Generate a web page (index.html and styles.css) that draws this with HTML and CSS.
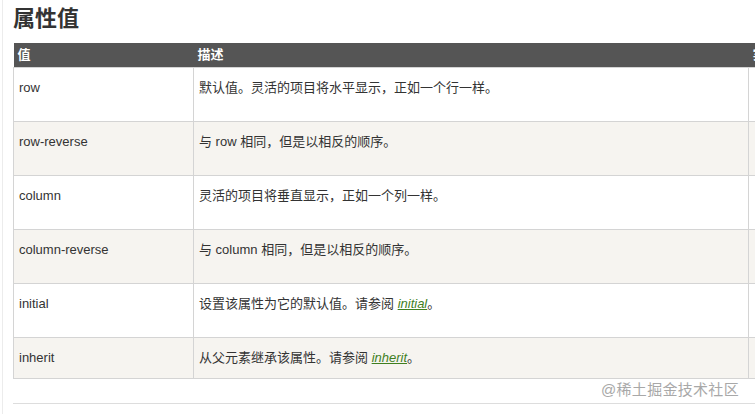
FILE: index.html
```html
<!DOCTYPE html>
<html lang="zh-CN">
<head>
<meta charset="utf-8">
<title>属性值</title>
<link rel="stylesheet" href="styles.css">
</head>
<body>
<div class="wrap">
  <h2 class="title">属性值</h2>
  <table class="ref">
    <thead>
      <tr><th class="c1">值</th><th class="c2">描述</th><th class="c3">实例</th></tr>
    </thead>
    <tbody>
      <tr class="tall"><td>row</td><td>默认值。灵活的项目将水平显示，正如一个行一样。</td><td></td></tr>
      <tr class="tall alt"><td>row-reverse</td><td>与 row 相同，但是以相反的顺序。</td><td></td></tr>
      <tr class="tall"><td>column</td><td>灵活的项目将垂直显示，正如一个列一样。</td><td></td></tr>
      <tr class="tall alt"><td>column-reverse</td><td>与 column 相同，但是以相反的顺序。</td><td></td></tr>
      <tr class="tall"><td>initial</td><td>设置该属性为它的默认值。请参阅 <a class="lnk" href="#">initial</a>。</td><td></td></tr>
      <tr class="alt"><td>inherit</td><td>从父元素继承该属性。请参阅 <a class="lnk" href="#">inherit</a>。</td><td></td></tr>
    </tbody>
  </table>
  <div class="rule"></div>
</div>
<div class="mark">@稀土掘金技术社区</div>
</body>
</html>
```
FILE: styles.css
```css
html, body {
  margin: 0;
  padding: 0;
  overflow: hidden;
  background: #fff;
}
body {
  font-family: "Liberation Sans", "Noto Sans CJK SC", sans-serif;
  color: #333;
  width: 755px;
  height: 414px;
  position: relative;
}
.wrap {
  margin-left: 2px;
  border-left: 1px solid #ececec;
  padding-left: 10px;
  height: 414px;
  box-sizing: border-box;
}
.title {
  margin: 0;
  padding-top: 4px;
  font-size: 22px;
  line-height: 30px;
  font-weight: bold;
  color: #333;
}
.ref {
  margin-top: 9px;
  border-collapse: collapse;
  width: 936px;
  table-layout: fixed;
  font-size: 13px;
}
.ref th {
  background: #555;
  color: #fff;
  font-weight: bold;
  text-align: left;
  height: 24px;
  padding: 0 4px;
  border: 0;
  line-height: 23px;
  box-sizing: border-box;
}
.c1 { width: 180px; }
.c2 { width: 555px; }
.c3 { width: 200px; }
.ref td {
  border: 1px solid #d4d4d4;
  padding: 8px 5px;
  line-height: 24px;
  vertical-align: top;
  box-sizing: border-box;
  height: 41px;
}
.ref tr.tall td {
  height: 54px;
}
.ref tr.alt td {
  background: #f6f4f0;
}
.lnk {
  color: #3f7f1f;
  font-style: italic;
  text-decoration: underline;
}
.rule {
  margin-top: 24px;
  border-top: 1px solid #ddd;
  width: 760px;
}
.mark {
  position: absolute;
  left: 601px;
  top: 380px;
  font-size: 15px;
  line-height: 20px;
  color: #a8a8a8;
  letter-spacing: 0.3px;
}
```
